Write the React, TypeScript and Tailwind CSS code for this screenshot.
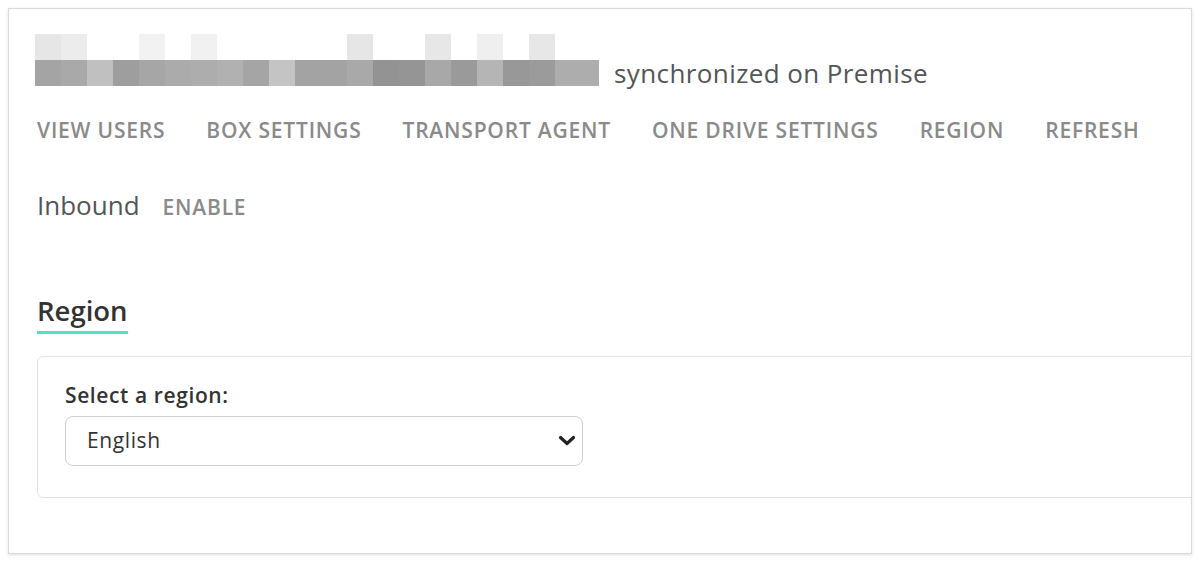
const lowerRow = [
  "#a4a4a4", "#a9a9a9", "#c0c0c0", "#9e9e9e", "#a6a6a6", "#ababab", "#adadad", "#b1b1b1",
  "#a5a5a5", "#c4c4c4", "#a3a3a3", "#a3a3a3", "#a9a9a9", "#939393", "#959595", "#a8a8a8",
  "#9a9a9a", "#b5b5b5", "#989898", "#9b9b9b", "#adadad", "#adadad",
];

const upperRow = [
  "#e6e6e6", "#ececec", "#ffffff", "#ffffff", "#f2f2f2", "#ffffff", "#f1f1f1", "#ffffff",
  "#ffffff", "#ffffff", "#ffffff", "#ffffff", "#e6e6e6", "#ffffff", "#ffffff", "#e7e7e7",
  "#ffffff", "#efefef", "#ffffff", "#e7e7e7", "#ffffff", "#ffffff",
];

const navItems = ["View users", "Box settings", "Transport agent", "One drive settings", "Region", "Refresh"];

function BlurredName() {
  // pixelated account name, kept as blocks like the screenshot
  return (
    <div className="w-[564px] -ml-[2px] overflow-hidden shrink-0">
      <div className="flex">
        {upperRow.map((c, i) => (
          <div key={i} className="w-[26px] h-[26px] shrink-0" style={{ backgroundColor: c }} />
        ))}
      </div>
      <div className="flex">
        {lowerRow.map((c, i) => (
          <div key={i} className="w-[26px] h-[26px] shrink-0" style={{ backgroundColor: c }} />
        ))}
      </div>
    </div>
  );
}

export default function App() {
  return (
    <div className="min-h-screen bg-white p-2 font-['Open_Sans',sans-serif]">
      <div className="h-[546px] w-[1184px] border border-[#d9d9d9] bg-white shadow-[0_1px_3px_rgba(0,0,0,0.12)] overflow-hidden">
        <div className="pl-[28px] pt-[25px]">
          <div className="flex items-end">
            <BlurredName />
            <span className="ml-[15px] text-[26px] leading-[30px] tracking-[0.4px] text-[#555555] -mb-[2px]">synchronized on Premise</span>
          </div>

          <nav className="flex gap-[41px] mt-[29px]">
            {navItems.map((item) => (
              <span key={item} className="uppercase text-[21px] leading-[30px] font-semibold text-[#8a8a8a] tracking-[0.8px]">
                {item}
              </span>
            ))}
          </nav>

          <div className="flex items-baseline gap-[23px] mt-[43px]">
            <span className="text-[26px] leading-[34px] text-[#555555]">Inbound</span>
            <span className="uppercase text-[21px] font-semibold text-[#8a8a8a] tracking-[0.8px]">Enable</span>
          </div>

          <div className="mt-[69px] inline-block">
            <h2 className="text-[27.5px] leading-[36px] font-semibold text-[#333333]">Region</h2>
            <div className="h-[3px] bg-[#50e3c2] mt-[2px]" />
          </div>

          <div className="mt-[22px] -mr-[10px] h-[142px] rounded-[6px] border border-[#e2e2e2] pl-[27px] pt-[25px]">
            <label className="block text-[21px] leading-[26px] tracking-[0.6px] font-semibold text-[#333333]">Select a region:</label>
            <div className="relative mt-[8px] w-[518px] h-[50px] rounded-[8px] border border-[#cfcfcf] bg-white flex items-center pl-[21px]">
              <span className="text-[21px] tracking-[0.6px] text-[#333333]">English</span>
              <svg className="absolute right-[6px] top-[18px]" width="18" height="12" viewBox="0 0 18 12" fill="none">
                <path d="M2.5 2.5 L9 8.5 L15.5 2.5" stroke="#222222" strokeWidth="3.2" strokeLinecap="round" strokeLinejoin="round" />
              </svg>
            </div>
          </div>
        </div>
      </div>
    </div>
  );
}
